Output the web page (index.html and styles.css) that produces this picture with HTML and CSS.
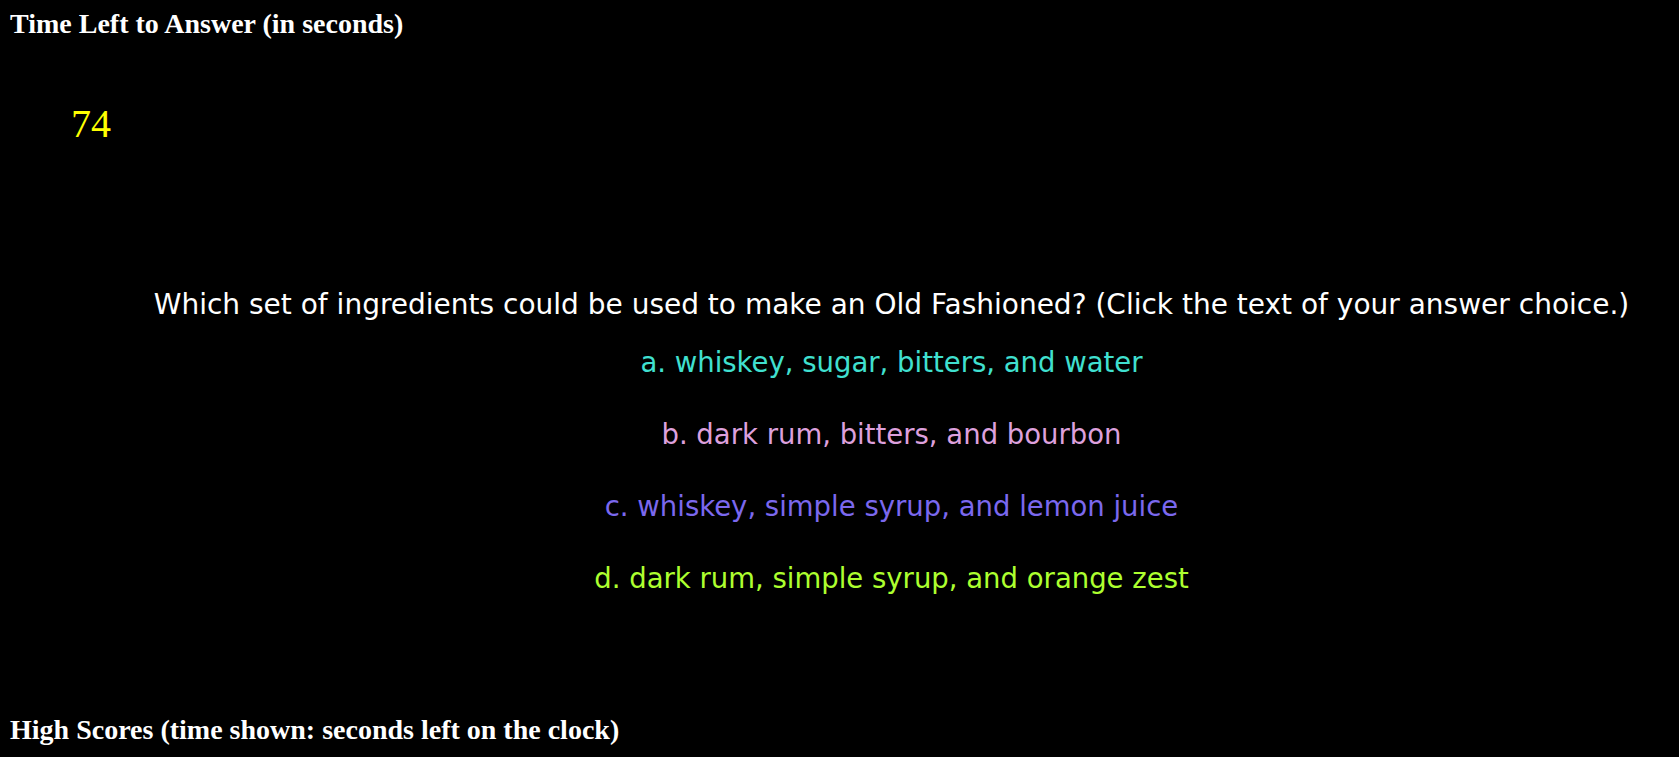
FILE: index.html
```html
<!DOCTYPE html>
<html lang="en">
<head>
<meta charset="utf-8">
<title>Cocktail Quiz</title>
<link rel="stylesheet" href="styles.css">
</head>
<body>
  <h2 class="section-title">Time Left to Answer (in seconds)</h2>
  <div class="timer">74</div>
  <div class="quiz">
    <p class="question">Which set of ingredients could be used to make an Old Fashioned? (Click the text of your answer choice.)</p>
    <div class="answers">
      <p class="answer answer-a">a. whiskey, sugar, bitters, and water</p>
      <p class="answer answer-b">b. dark rum, bitters, and bourbon</p>
      <p class="answer answer-c">c. whiskey, simple syrup, and lemon juice</p>
      <p class="answer answer-d">d. dark rum, simple syrup, and orange zest</p>
    </div>
  </div>
  <h2 class="section-title scores-title">High Scores (time shown: seconds left on the clock)</h2>
</body>
</html>
```
FILE: styles.css
```css
html, body {
  background: #000;
}
body {
  margin: 0;
  padding: 8px 10px 0;
  color: #fff;
  font-family: "Liberation Serif", "Times New Roman", serif;
}
.section-title {
  margin: 0;
  font-size: 28px;
  font-weight: 700;
  line-height: 32px;
  color: #fff;
}
.timer {
  margin-top: 61px;
  padding-left: 61px;
  font-size: 40px;
  line-height: 46px;
  color: #ffff00;
}
.quiz {
  margin-top: 138px;
  margin-left: 104px;
  text-align: center;
  font-family: "Comic Sans MS", "DejaVu Sans", sans-serif;
  line-height: 40px;
}
.question {
  margin: 0;
  font-size: 28px;
  color: #fff;
}
.answers {
  margin-top: 17px;
}
.answer {
  margin: 0 0 32px;
  font-size: 27.5px;
  cursor: pointer;
}
.answer:last-child {
  margin-bottom: 0;
}
.answer-a { color: #40e0d0; }
.answer-b { color: #dda0dd; }
.answer-c { color: #7b68ee; }
.answer-d { color: #adff2f; }
.scores-title {
  margin-top: 116px;
}
```
